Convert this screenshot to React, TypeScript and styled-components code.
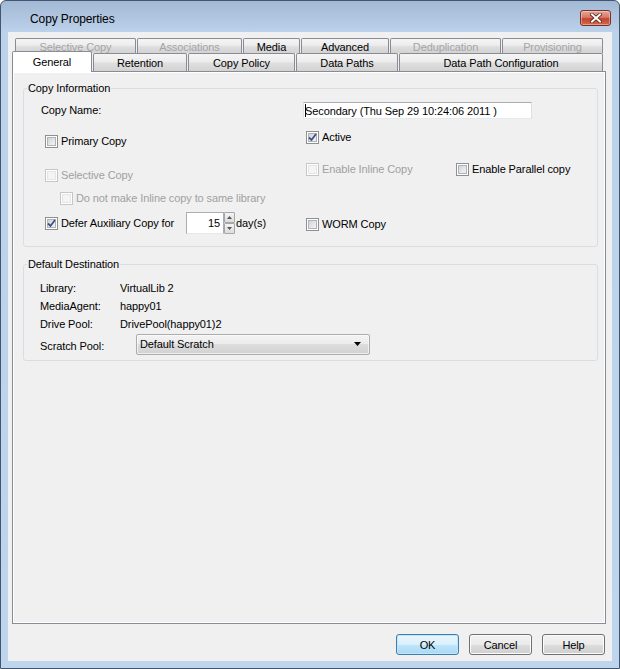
import React from "react";
import styled, { createGlobalStyle } from "styled-components";

const GlobalStyle = createGlobalStyle`
  html, body {
    margin: 0;
    padding: 0;
    background: #ffffff;
  }
  body {
    font-family: "Liberation Sans", Arial, sans-serif;
    font-size: 11px;
    letter-spacing: -0.1px;
    color: #000;
  }
`;

const Window = styled.div`
  width: 620px;
  height: 669px;
  box-sizing: border-box;
  display: flex;
  flex-direction: column;
  border: 1px solid #44566e;
  border-radius: 6px 6px 0 0;
  background: linear-gradient(#a2b9d5 0px, #bcd1ea 31px, #bfd5ee 100%);
  overflow: hidden;
`;

const TitleBar = styled.div`
  height: 31px;
  flex: none;
  display: flex;
  align-items: flex-start;
  justify-content: space-between;
  padding-left: 29px;
  padding-right: 8px;
`;

const Title = styled.div`
  margin-top: 11px;
  font-size: 12px;
  line-height: 15px;
  letter-spacing: -0.1px;
  color: #000;
`;

const CloseButton = styled.div`
  margin-top: 9px;
  width: 31px;
  height: 16px;
  box-sizing: border-box;
  border: 1px solid #7b2f25;
  border-radius: 3px;
  background: linear-gradient(#e4a597 0%, #d77a67 45%, #c4432d 55%, #cf6a4f 100%);
  box-shadow: inset 0 0 0 1px rgba(255, 255, 255, 0.35);
  display: flex;
  align-items: center;
  justify-content: center;
`;

const Frame = styled.div`
  flex: 1;
  display: flex;
  padding: 0 7px 7px;
  min-height: 0;
`;

const Client = styled.div`
  flex: 1;
  display: flex;
  flex-direction: column;
  background: #f0f0f0;
  padding: 6px 6px 6px 4px;
`;

const TabRow = styled.div<{ $h: number; $ml: number }>`
  display: flex;
  align-items: flex-end;
  gap: 1px;
  height: ${(p) => p.$h}px;
  margin-left: ${(p) => p.$ml}px;
  flex: none;
`;

const Tab = styled.div<{ $w: number; $disabled?: boolean; $selected?: boolean }>`
  position: relative;
  z-index: ${(p) => (p.$selected ? 2 : 1)};
  width: ${(p) => p.$w}px;
  height: ${(p) => (p.$selected ? "21px" : "100%")};
  margin-bottom: ${(p) => (p.$selected ? "-1px" : "0")};
  flex: none;
  box-sizing: border-box;
  border: 1px solid #898c95;
  border-bottom: none;
  border-radius: 2px 2px 0 0;
  background: ${(p) =>
    p.$selected
      ? "#ffffff"
      : "linear-gradient(#f5f5f5 0%, #ececec 45%, #dedede 55%, #d3d3d3 100%)"};
  color: ${(p) => (p.$disabled ? "#a5a5a5" : "#000")};
  display: flex;
  align-items: center;
  justify-content: center;
  padding-top: ${(p) => (p.$selected ? "0" : "1px")};
  white-space: nowrap;
`;

const Panel = styled.div`
  flex: 1;
  box-sizing: border-box;
  border: 1px solid #898c95;
  box-shadow: inset 1px 1px 0 #ffffff, inset -1px -1px 0 #ffffff;
  padding: 10px 7px 0 10px;
  display: flex;
  flex-direction: column;
`;

const Group = styled.fieldset<{ $mt?: number }>`
  margin: ${(p) => p.$mt ?? 0}px 0 0;
  padding: 0;
  min-width: 0;
  border: 1px solid #d5dfe5;
  border-radius: 3px;
`;

const Legend = styled.legend`
  margin-left: 3px;
  padding: 0 1px;
  line-height: 13px;
`;

const InfoBody = styled.div`
  display: grid;
  grid-template-columns: 262px 1fr;
  padding: 5px 0 12px 17px;
`;

const Column = styled.div`
  display: flex;
  flex-direction: column;
  align-items: flex-start;
`;

const LabelRow = styled.div<{ $h: number }>`
  height: ${(p) => p.$h}px;
  display: flex;
  align-items: center;
`;

const CheckRow = styled.div<{ $mt?: number; $ml?: number; $h?: number }>`
  display: flex;
  align-items: center;
  height: ${(p) => p.$h ?? 13}px;
  margin-top: ${(p) => p.$mt ?? 0}px;
  margin-left: ${(p) => p.$ml ?? 0}px;
`;

const CheckCell = styled.div<{ $w?: number }>`
  display: flex;
  align-items: center;
  gap: 3px;
  width: ${(p) => (p.$w ? `${p.$w}px` : "auto")};
  flex: none;
`;

const Box = styled.span<{ $disabled?: boolean }>`
  flex: none;
  box-sizing: border-box;
  width: 13px;
  height: 13px;
  display: flex;
  align-items: center;
  justify-content: center;
  border: 1px solid ${(p) => (p.$disabled ? "#c6c6c6" : "#8f8f8f")};
  background: ${(p) =>
    p.$disabled ? "#f4f4f4" : "linear-gradient(135deg, #c4c8ce 0%, #e9eaec 60%, #f8f8f8 100%)"};
  box-shadow: inset 0 0 0 1px #ffffff,
    inset 0 0 0 2px ${(p) => (p.$disabled ? "#e5e5e5" : "#aeb3b9")};
`;

const CheckText = styled.span<{ $disabled?: boolean }>`
  color: ${(p) => (p.$disabled ? "#a0a0a0" : "#000")};
  white-space: nowrap;
  line-height: 13px;
`;

const NameField = styled.div`
  margin-top: 2px;
  width: 229px;
  height: 17px;
  box-sizing: border-box;
  border: 1px solid #abadb3;
  border-left-color: #e2e3ea;
  border-right-color: #dbdfe6;
  border-bottom-color: #e3e9ef;
  background: #ffffff;
  display: flex;
  align-items: center;
  padding-left: 1px;
  white-space: nowrap;
  overflow: hidden;
`;

const Caret = styled.span`
  display: inline-block;
  width: 1px;
  height: 13px;
  background: #000;
  margin-right: -1px;
  flex: none;
`;

const Spin = styled.div`
  display: flex;
  height: 22px;
  flex: none;
`;

const SpinField = styled.div`
  width: 38px;
  box-sizing: border-box;
  border: 1px solid #abadb3;
  border-bottom-color: #e3e9ef;
  background: #ffffff;
  text-align: right;
  padding-right: 3px;
  line-height: 20px;
`;

const SpinButtons = styled.div`
  width: 11px;
  display: flex;
  flex-direction: column;
`;

const SpinButton = styled.div`
  flex: 1;
  box-sizing: border-box;
  border: 1px solid #a7a7a7;
  border-radius: 1px;
  background: linear-gradient(#f4f4f4, #dcdcdc);
  display: flex;
  align-items: center;
  justify-content: center;
`;

const SpinUnit = styled.span`
  margin-left: 1px;
  align-self: center;
`;

const DestBody = styled.div`
  padding: 8px 0 5px 16px;
  display: flex;
  flex-direction: column;
`;

const InfoGrid = styled.div`
  display: grid;
  grid-template-columns: 80px auto;
  grid-auto-rows: 18px;
  align-items: center;
`;

const ScratchRow = styled.div`
  display: flex;
  align-items: center;
  height: 21px;
  margin-top: 1px;
`;

const ScratchLabel = styled.span`
  width: 96px;
  padding-top: 2px;
`;

const Combo = styled.div`
  width: 234px;
  height: 21px;
  box-sizing: border-box;
  border: 1px solid #acacac;
  border-radius: 2px;
  background: linear-gradient(#f3f3f3 0%, #ebebeb 50%, #dddddd 50%, #d1d1d1 100%);
  box-shadow: inset 0 0 0 1px rgba(255, 255, 255, 0.6);
  display: flex;
  align-items: center;
  justify-content: space-between;
  padding: 0 8px 2px 3px;
`;

const ButtonRow = styled.div`
  display: flex;
  justify-content: flex-end;
  gap: 10px;
  margin-top: 10px;
  padding-right: 1px;
  flex: none;
`;

const Button = styled.div<{ $default?: boolean }>`
  width: 63px;
  height: 21px;
  box-sizing: border-box;
  border: 1px solid ${(p) => (p.$default ? "#3c7fb1" : "#707070")};
  border-radius: 3px;
  background: ${(p) =>
    p.$default
      ? "linear-gradient(#eaf6fd 0%, #d9f0fc 50%, #bee6fd 50%, #a7d9f5 100%)"
      : "linear-gradient(#f2f2f2 0%, #ebebeb 50%, #dddddd 50%, #cfcfcf 100%)"};
  box-shadow: inset 0 0 0 1px ${(p) => (p.$default ? "#c4e5f6" : "#fcfcfc")};
  display: flex;
  align-items: center;
  justify-content: center;
`;

function CloseGlyph() {
  return (
    <svg width="12" height="10" viewBox="0 0 12 10">
      <path d="M2 1.5 L10 8.5 M10 1.5 L2 8.5" stroke="#5a1e16" strokeWidth="3.6" strokeLinecap="square" />
      <path d="M2 1.5 L10 8.5 M10 1.5 L2 8.5" stroke="#ffffff" strokeWidth="2" strokeLinecap="square" />
    </svg>
  );
}

function Check({
  label,
  checked,
  disabled,
  width,
}: {
  label: string;
  checked?: boolean;
  disabled?: boolean;
  width?: number;
}) {
  return (
    <CheckCell $w={width}>
      <Box $disabled={disabled}>
        {checked && (
          <svg width="9" height="9" viewBox="0 0 9 9">
            <path d="M1 4.5 L3.5 7 L8 1" fill="none" stroke="#3e5287" strokeWidth="1.8" />
          </svg>
        )}
      </Box>
      <CheckText $disabled={disabled}>{label}</CheckText>
    </CheckCell>
  );
}

function Arrow({ up }: { up?: boolean }) {
  return (
    <svg width="5" height="3" viewBox="0 0 5 3">
      <path d={up ? "M0 3 L2.5 0 L5 3 Z" : "M0 0 L5 0 L2.5 3 Z"} fill="#555" />
    </svg>
  );
}

const topTabs = [
  { label: "Selective Copy", w: 121, disabled: true },
  { label: "Associations", w: 105, disabled: true },
  { label: "Media", w: 57 },
  { label: "Advanced", w: 88 },
  { label: "Deduplication", w: 111, disabled: true },
  { label: "Provisioning", w: 101, disabled: true },
];

const bottomTabs = [
  { label: "General", w: 80, selected: true },
  { label: "Retention", w: 94 },
  { label: "Copy Policy", w: 107 },
  { label: "Data Paths", w: 102 },
  { label: "Data Path Configuration", w: 204 },
];

export default function App() {
  return (
    <>
      <GlobalStyle />
      <Window>
        <TitleBar>
          <Title>Copy Properties</Title>
          <CloseButton>
            <CloseGlyph />
          </CloseButton>
        </TitleBar>
        <Frame>
          <Client>
            <TabRow $h={15} $ml={3}>
              {topTabs.map((t) => (
                <Tab key={t.label} $w={t.w} $disabled={t.disabled}>
                  {t.label}
                </Tab>
              ))}
            </TabRow>
            <TabRow $h={18} $ml={0}>
              {bottomTabs.map((t) => (
                <Tab key={t.label} $w={t.w} $selected={t.selected}>
                  {t.label}
                </Tab>
              ))}
            </TabRow>
            <Panel>
              <Group>
                <Legend>Copy Information</Legend>
                <InfoBody>
                  <Column>
                    <LabelRow $h={20}>Copy Name:</LabelRow>
                    <CheckRow $mt={15} $ml={4}>
                      <Check label="Primary Copy" />
                    </CheckRow>
                    <CheckRow $mt={21} $ml={4}>
                      <Check label="Selective Copy" disabled />
                    </CheckRow>
                    <CheckRow $mt={10} $ml={19}>
                      <Check label="Do not make Inline copy to same library" disabled />
                    </CheckRow>
                    <CheckRow $mt={7} $ml={4} $h={22}>
                      <Check label="Defer Auxiliary Copy for" checked width={141} />
                      <Spin>
                        <SpinField>15</SpinField>
                        <SpinButtons>
                          <SpinButton>
                            <Arrow up />
                          </SpinButton>
                          <SpinButton>
                            <Arrow />
                          </SpinButton>
                        </SpinButtons>
                        <SpinUnit>day(s)</SpinUnit>
                      </Spin>
                    </CheckRow>
                  </Column>
                  <Column>
                    <NameField>
                      <Caret />
                      Secondary (Thu Sep 29 10:24:06 2011 )
                    </NameField>
                    <CheckRow $mt={12} $ml={3}>
                      <Check label="Active" checked />
                    </CheckRow>
                    <CheckRow $mt={19} $ml={3}>
                      <Check label="Enable Inline Copy" disabled width={150} />
                      <Check label="Enable Parallel copy" />
                    </CheckRow>
                    <CheckRow $mt={42} $ml={3}>
                      <Check label="WORM Copy" />
                    </CheckRow>
                  </Column>
                </InfoBody>
              </Group>
              <Group $mt={11}>
                <Legend>Default Destination</Legend>
                <DestBody>
                  <InfoGrid>
                    <span>Library:</span>
                    <span>VirtualLib 2</span>
                    <span>MediaAgent:</span>
                    <span>happy01</span>
                    <span>Drive Pool:</span>
                    <span>DrivePool(happy01)2</span>
                  </InfoGrid>
                  <ScratchRow>
                    <ScratchLabel>Scratch Pool:</ScratchLabel>
                    <Combo>
                      <span>Default Scratch</span>
                      <svg width="7" height="4" viewBox="0 0 7 4">
                        <path d="M0 0 L7 0 L3.5 4 Z" fill="#000" />
                      </svg>
                    </Combo>
                  </ScratchRow>
                </DestBody>
              </Group>
            </Panel>
            <ButtonRow>
              <Button $default>OK</Button>
              <Button>Cancel</Button>
              <Button>Help</Button>
            </ButtonRow>
          </Client>
        </Frame>
      </Window>
    </>
  );
}
